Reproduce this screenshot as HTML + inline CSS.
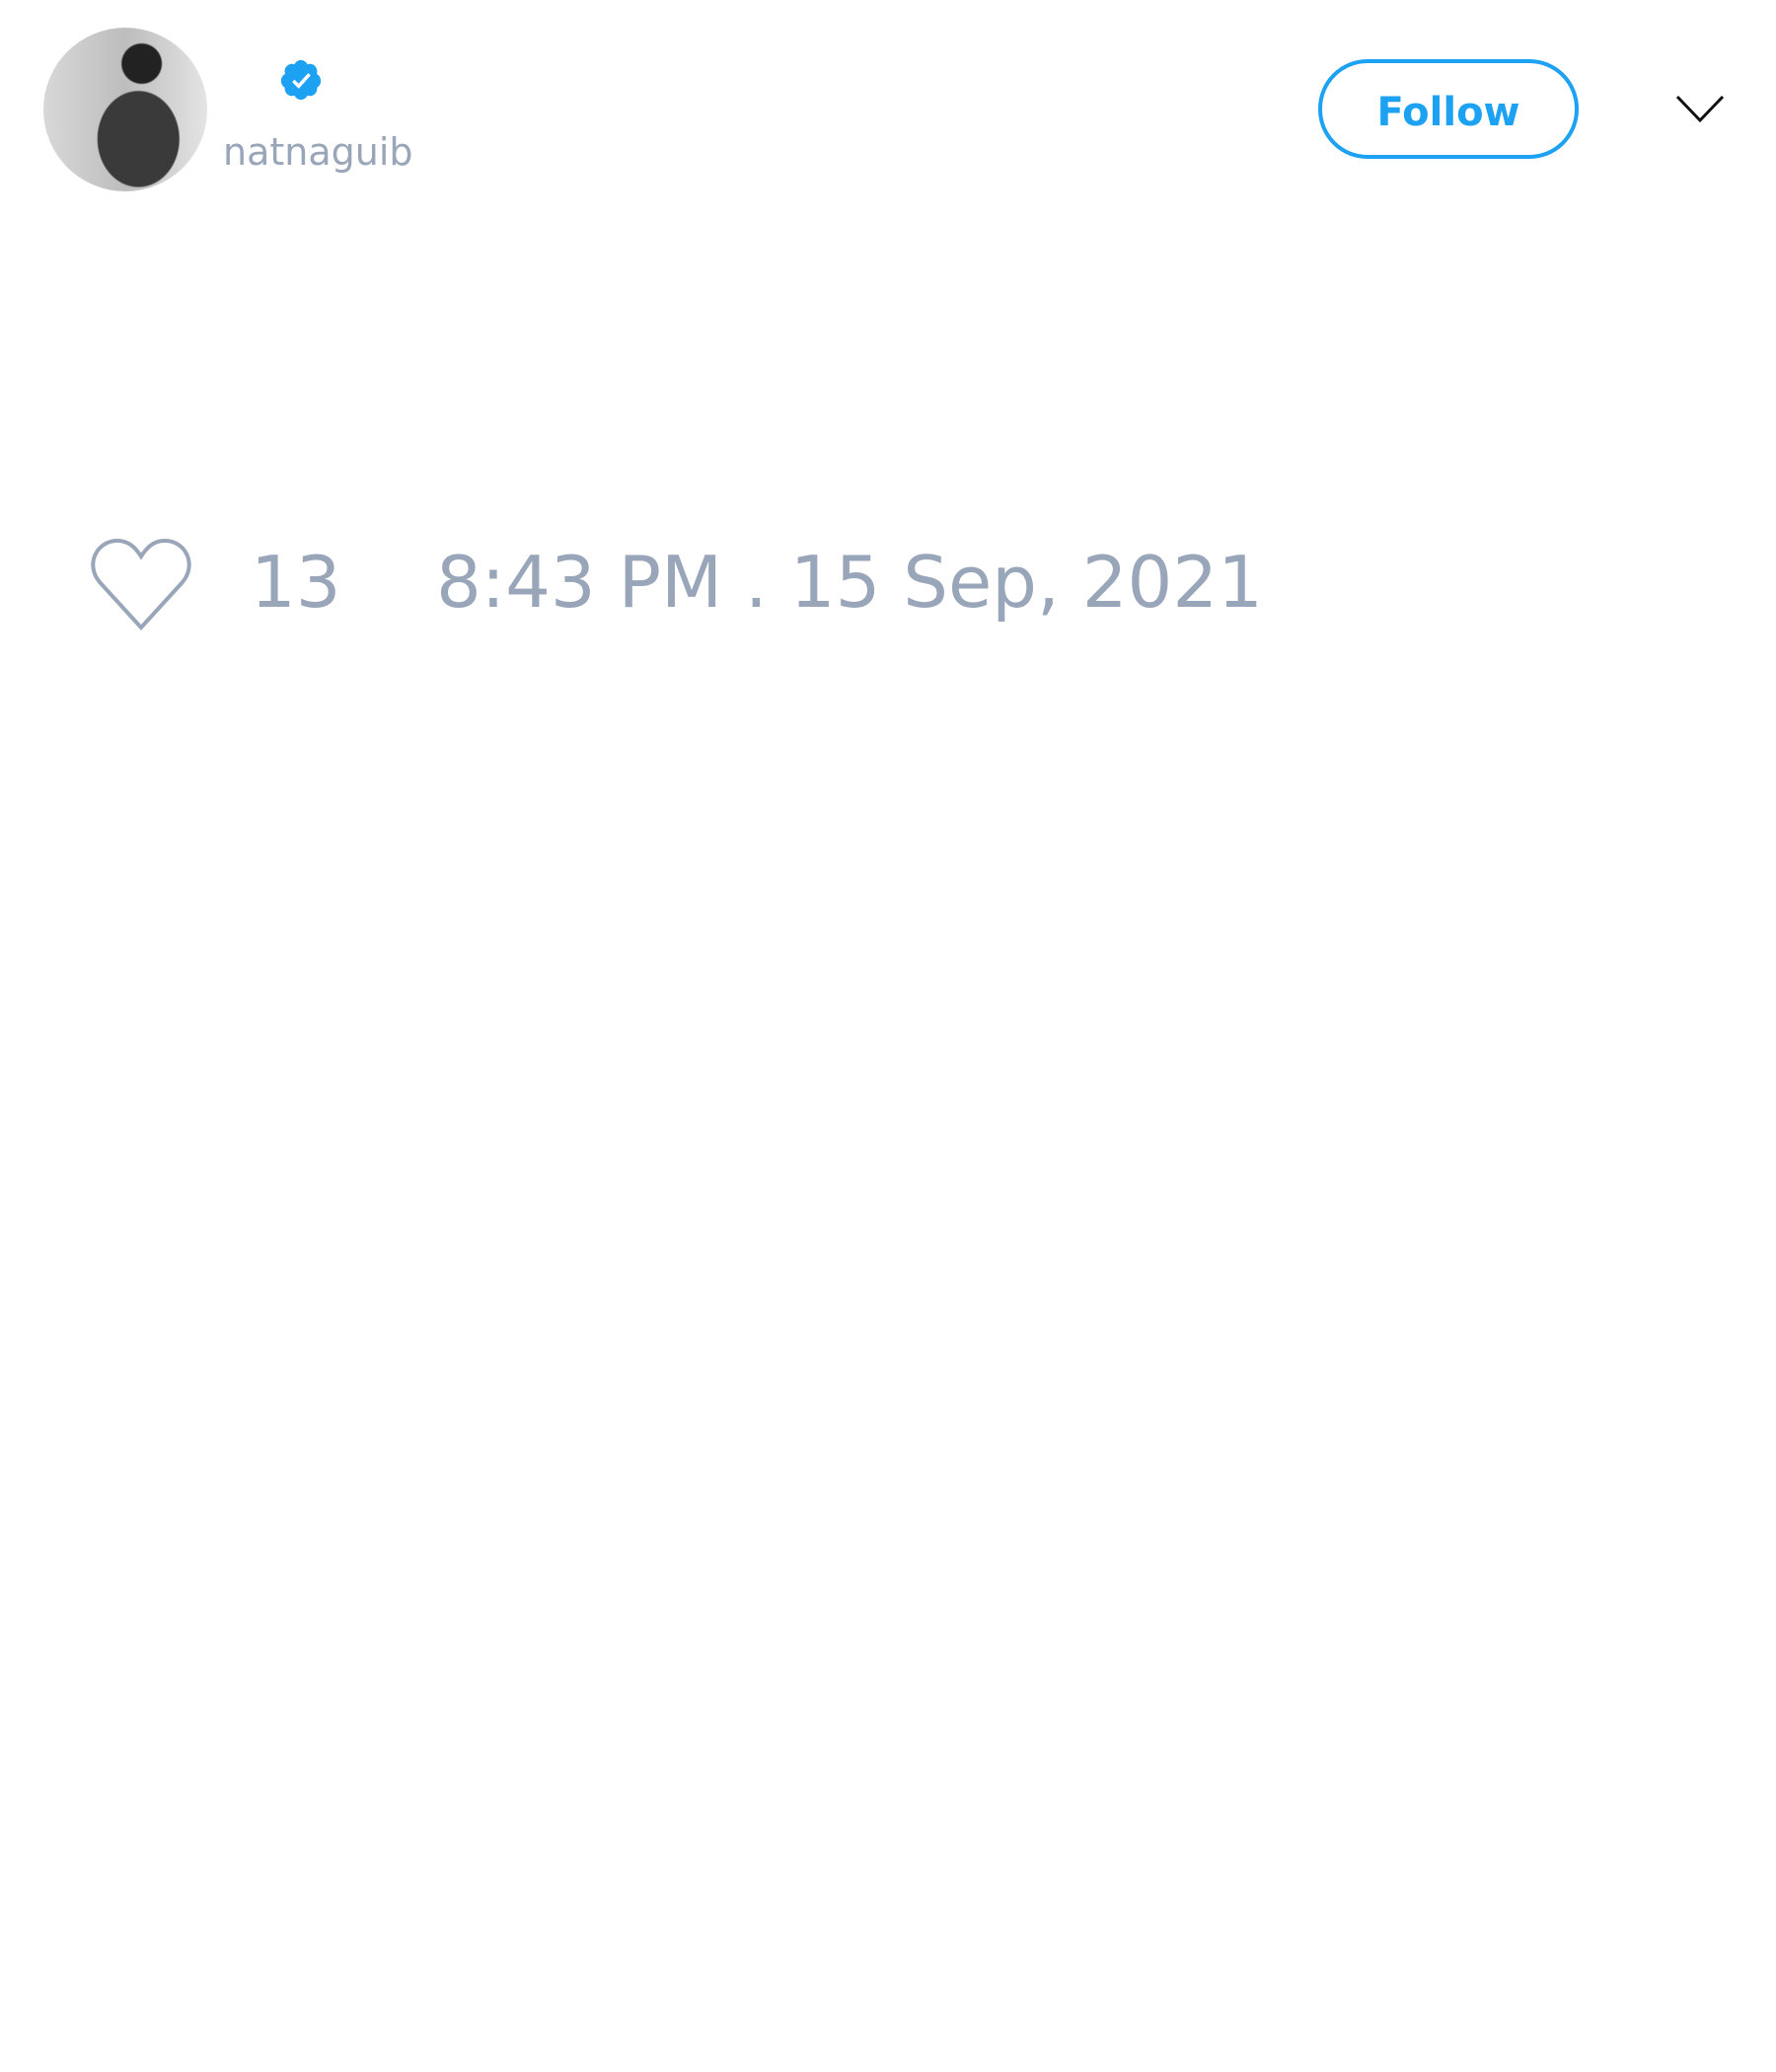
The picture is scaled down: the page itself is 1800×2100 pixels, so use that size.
<!DOCTYPE html>
<html><head><style>
body{margin:0;width:1800px;height:2100px;background:#fff;position:relative;font-family:"DejaVu Sans","Liberation Sans",sans-serif;overflow:hidden}
.a{position:absolute}
</style></head><body>
<div class="a" style="left:44px;top:28px;width:166px;height:166px;border-radius:50%;background:radial-gradient(circle at 60% 22%,#222 0 12%,transparent 13%),radial-gradient(ellipse at 58% 68%,#3a3a3a 0 30%,transparent 31%),linear-gradient(90deg,#d8d8d8,#bdbdbd 50%,#e4e4e4)"></div>
<svg class="a" style="left:282px;top:58px" width="46" height="46" viewBox="0 0 24 24"><path fill="#1da1f2" d="M22.5 12.5c0-1.58-.88-2.950-2.150-3.6.15-.44.23-.91.23-1.4 0-2.21-1.71-4-3.820-4-.47 0-.92.08-1.340.25C14.820 2.420 13.5 1.5 12 1.5s-2.820.92-3.420 2.250c-.42-.17-.87-.25-1.340-.25-2.110 0-3.820 1.790-3.820 4 0 .49.08.96.23 1.4C2.380 9.550 1.5 10.920 1.5 12.5c0 1.5.79 2.8 1.950 3.460-.02.17-.03.34-.03.52 0 2.210 1.710 4 3.820 4 .47 0 .92-.09 1.340-.25.62 1.330 1.930 2.250 3.420 2.250s2.810-.92 3.420-2.250c.42.16.87.25 1.340.25 2.110 0 3.820-1.790 3.820-4 0-.18-.01-.35-.03-.52 1.160-.66 1.950-1.960 1.950-3.460z"/><path d="M8 12.5l2.8 2.8L16.5 9" stroke="#fff" stroke-width="1.8" fill="none"/></svg>
<div class="a" style="left:226px;top:129px;font-size:38px;color:#99a6b9;line-height:50px">natnaguib</div>
<div class="a" style="left:1336px;top:60px;width:256px;height:93px;border:4px solid #1da1f2;border-radius:50px;color:#1da1f2;font-weight:bold;font-size:40px;line-height:101px;text-align:center">Follow</div>
<svg class="a" style="left:1698px;top:94px" width="50" height="32" viewBox="0 0 50 32"><path d="M2 4L25 28L48 4" stroke="#111" stroke-width="3" fill="none"/></svg>
<svg class="a" style="left:91px;top:544px" width="104" height="96" viewBox="0 0 104 96"><path d="M52 92L10 46C-5 28 7 4 28 4C40 4 47 12 52 20C57 12 64 4 76 4C97 4 109 28 94 46Z" stroke="#99a6b9" stroke-width="4" fill="none"/></svg>
<div class="a" style="left:254px;top:548px;font-size:72px;color:#99a6b9;line-height:84px">13</div>
<div class="a" style="left:442px;top:548px;font-size:72px;color:#99a6b9;line-height:84px;white-space:nowrap">8:43 PM . 15 Sep, 2021</div>
</body></html>
